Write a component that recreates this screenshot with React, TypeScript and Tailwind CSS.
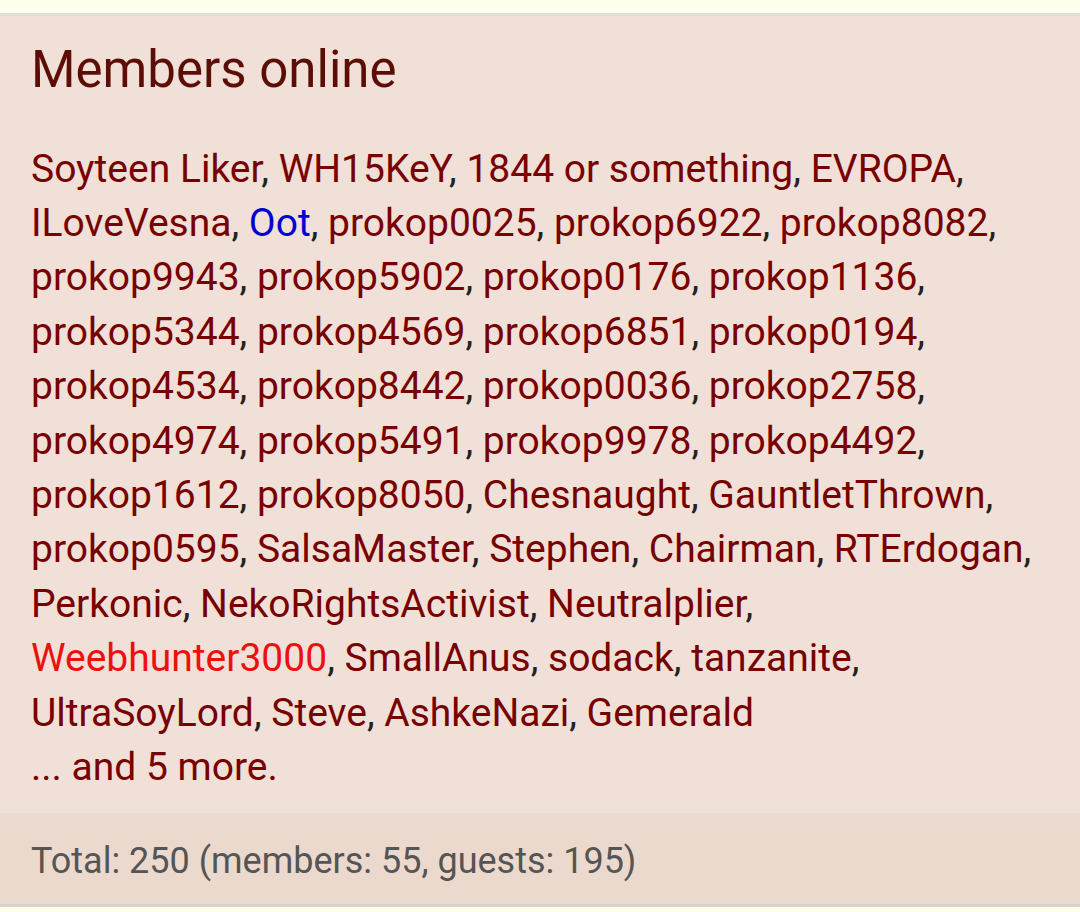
import React from "react";

type Name = { n: string; c?: "blue" | "red" };

const names: Name[] = [
  { n: "Soyteen Liker" },
  { n: "WH15KeY" },
  { n: "1844 or something" },
  { n: "EVROPA" },
  { n: "ILoveVesna" },
  { n: "Oot", c: "blue" },
  { n: "prokop0025" },
  { n: "prokop6922" },
  { n: "prokop8082" },
  { n: "prokop9943" },
  { n: "prokop5902" },
  { n: "prokop0176" },
  { n: "prokop1136" },
  { n: "prokop5344" },
  { n: "prokop4569" },
  { n: "prokop6851" },
  { n: "prokop0194" },
  { n: "prokop4534" },
  { n: "prokop8442" },
  { n: "prokop0036" },
  { n: "prokop2758" },
  { n: "prokop4974" },
  { n: "prokop5491" },
  { n: "prokop9978" },
  { n: "prokop4492" },
  { n: "prokop1612" },
  { n: "prokop8050" },
  { n: "Chesnaught" },
  { n: "GauntletThrown" },
  { n: "prokop0595" },
  { n: "SalsaMaster" },
  { n: "Stephen" },
  { n: "Chairman" },
  { n: "RTErdogan" },
  { n: "Perkonic" },
  { n: "NekoRightsActivist" },
  { n: "Neutralplier" },
  { n: "Weebhunter3000", c: "red" },
  { n: "SmallAnus" },
  { n: "sodack" },
  { n: "tanzanite" },
  { n: "UltraSoyLord" },
  { n: "Steve" },
  { n: "AshkeNazi" },
  { n: "Gemerald" },
];

export default function App() {
  return (
    <div
      className="w-[1080px] h-[912px] bg-[#fefeec] flex flex-col overflow-hidden"
      style={{ fontFamily: "Roboto, 'Noto Sans', sans-serif" }}
    >
      <div className="h-[13px] shrink-0" />
      <div className="border-t-[3px] border-b-[3px] border-t-[#e2ddd6] border-b-[#d8d2ca] bg-[#f0e0d8] flex flex-col">
        <div className="px-[31px] pt-[24px] pb-[19px]">
          <h2 className="text-[51px] leading-[60px] text-[#5c0e06] font-normal">
            Members online
          </h2>
          <div className="mt-[41.5px] text-[39px] leading-[54.4px] text-[#222]">
            {names.map((x, i) => (
              <React.Fragment key={i}>
                <span
                  className={
                    x.c === "blue"
                      ? "text-[#0000d0]"
                      : x.c === "red"
                      ? "text-[#ee0f0f]"
                      : "text-[#780000]"
                  }
                >
                  {x.n}
                </span>
                {i < names.length - 1 ? ", " : ""}
              </React.Fragment>
            ))}
            <div className="text-[#780000]">... and 5 more.</div>
          </div>
        </div>
        <div className="border-t-[4px] border-[#e6dcd5] bg-[#ecd9cd] px-[31px] h-[91px] flex items-center">
          <span className="text-[36px] text-[#555]">
            Total: 250 (members: 55, guests: 195)
          </span>
        </div>
      </div>
    </div>
  );
}
